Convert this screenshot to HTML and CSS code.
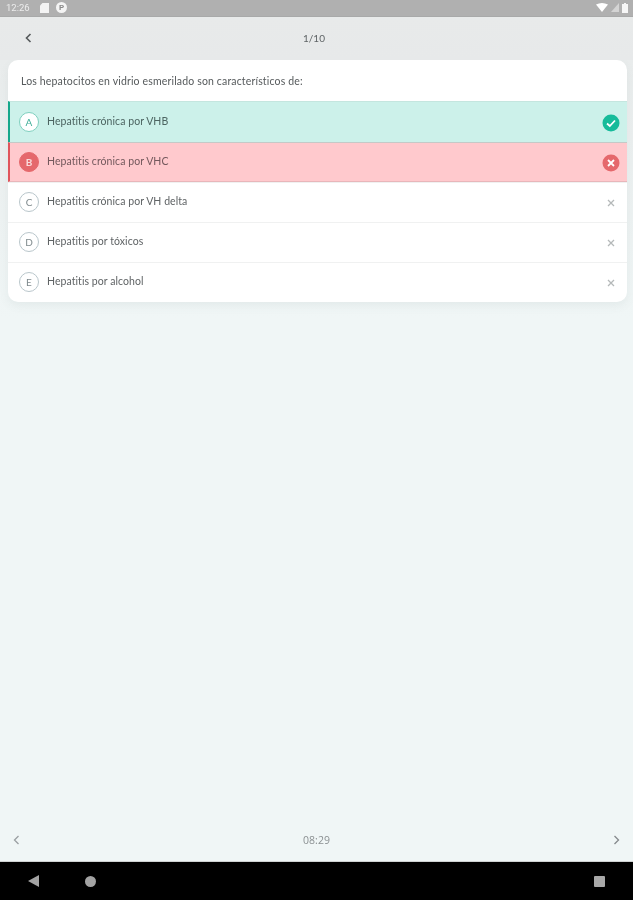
FILE: index.html
```html
<!DOCTYPE html>
<html lang="es">
<head>
<meta charset="utf-8">
<title>Pregunta 1/10</title>
<link rel="stylesheet" href="styles.css">
</head>
<body>
<div class="screen">
  <div class="statusbar">
    <div class="status-left">
      <span class="clock">12:26</span>
      <svg class="st-sd" width="9" height="10" viewBox="0 0 9 10"><path d="M2.5 0H9v10H0V2.5z" fill="#f4f4f4"/></svg>
      <span class="st-app">P</span>
    </div>
    <div class="status-right">
      <svg width="12" height="9" viewBox="0 0 12 9"><path d="M0 1.5C4-.5 8-.5 12 1.5L6 9z" fill="#fff"/></svg>
      <svg width="8" height="9" viewBox="0 0 8 9"><path d="M8 0V9H0z" fill="#d4d4d4"/></svg>
      <svg width="6" height="10" viewBox="0 0 6 10"><path d="M2 0H4V1H6V10H0V1H2z" fill="#f6f6f6"/></svg>
    </div>
  </div>

  <header class="topbar">
    <svg class="chev" width="7" height="10" viewBox="0 0 7 10"><path d="M5.5 1 1.5 5l4 4" fill="none" stroke="#55595b" stroke-width="1.6"/></svg>
    <span class="counter">1/10</span>
  </header>

  <main class="content">
    <section class="card">
      <p class="question">Los hepatocitos en vidrio esmerilado son característicos de:</p>
      <ul class="options">
        <li class="option correct">
          <span class="letter">A</span>
          <span class="label">Hepatitis crónica por VHB</span>
          <svg class="badge" width="18" height="18" viewBox="0 0 18 18"><circle cx="9" cy="9" r="8.5" fill="#16bb9a"/><path d="M5 9.5 7.8 12 13 6.5" fill="none" stroke="#fff" stroke-width="1.8"/></svg>
        </li>
        <li class="option wrong">
          <span class="letter">B</span>
          <span class="label">Hepatitis crónica por VHC</span>
          <svg class="badge" width="18" height="18" viewBox="0 0 18 18"><circle cx="9" cy="9" r="8.5" fill="#e5686c"/><path d="M6 6l6 6M12 6l-6 6" fill="none" stroke="#fff" stroke-width="1.8"/></svg>
        </li>
        <li class="option">
          <span class="letter">C</span>
          <span class="label">Hepatitis crónica por VH delta</span>
          <svg class="cross" width="18" height="18" viewBox="0 0 18 18"><path d="M6 6l6 6M12 6l-6 6" fill="none" stroke="#b4b8b9" stroke-width="1.3"/></svg>
        </li>
        <li class="option">
          <span class="letter">D</span>
          <span class="label">Hepatitis por tóxicos</span>
          <svg class="cross" width="18" height="18" viewBox="0 0 18 18"><path d="M6 6l6 6M12 6l-6 6" fill="none" stroke="#b4b8b9" stroke-width="1.3"/></svg>
        </li>
        <li class="option">
          <span class="letter">E</span>
          <span class="label">Hepatitis por alcohol</span>
          <svg class="cross" width="18" height="18" viewBox="0 0 18 18"><path d="M6 6l6 6M12 6l-6 6" fill="none" stroke="#b4b8b9" stroke-width="1.3"/></svg>
        </li>
      </ul>
    </section>
  </main>

  <footer class="bottombar">
    <svg width="7" height="10" viewBox="0 0 7 10"><path d="M5.5 1 1.5 5l4 4" fill="none" stroke="#9a9fa2" stroke-width="1.3"/></svg>
    <span class="timer">08:29</span>
    <svg width="7" height="10" viewBox="0 0 7 10"><path d="M1.5 1l4 4-4 4" fill="none" stroke="#85898c" stroke-width="1.3"/></svg>
  </footer>

  <nav class="navbar">
    <svg class="nav-back" width="11" height="12" viewBox="0 0 11 12"><path d="M11 0V12L0 6z" fill="#a3a3a3"/></svg>
    <span class="nav-home"></span>
    <span class="nav-recent"></span>
  </nav>
</div>
</body>
</html>
```
FILE: styles.css
```css
* { box-sizing: border-box; }
html, body { margin: 0; padding: 0; }
body { font-family: Lato, "Liberation Sans", sans-serif; background: #f0f6f6; }

.screen {
  width: 633px;
  height: 900px;
  display: flex;
  flex-direction: column;
  overflow: hidden;
  filter: blur(0.6px);
}

.statusbar {
  height: 17px;
  flex: none;
  background: #b0b0b0;
  border-bottom: 1px solid #a8a9a9;
  display: flex;
  align-items: center;
  justify-content: space-between;
  padding: 0 5px 1px 6px;
}
.status-left { display: flex; align-items: center; }
.clock { font: 9.5px/1 Roboto, sans-serif; color: #ececec; width: 34px; }
.st-app {
  width: 11px; height: 11px; margin-left: 7px;
  border-radius: 50%;
  background: #f4f4f4; color: #8a8a8a;
  font: 700 8px/11px Roboto, sans-serif;
  text-align: center;
}
.status-right { display: flex; align-items: center; gap: 3px; }

.topbar {
  height: 43px;
  flex: none;
  background: linear-gradient(#e8eaea, #e7e9ea);
  display: flex;
  align-items: center;
  justify-content: center;
  position: relative;
}
.chev { position: absolute; left: 25px; top: 16px; }
.counter { font-size: 10px; color: #5f6466; padding: 0 5px 2px 0; }

.content {
  flex: 1;
  min-height: 0;
  background: linear-gradient(#e9ecec, #f0f6f6 260px);
  padding: 0 6px 0 8px;
}
.card {
  background: #fff;
  border-radius: 10px;
  overflow: hidden;
  box-shadow: 0 4px 10px rgba(90, 110, 110, .08);
}
.question {
  margin: 0;
  height: 41px;
  padding: 0 13px;
  display: flex;
  align-items: center;
  font-size: 10.5px;
  color: #55595b;
  letter-spacing: .16px;
}
.options { list-style: none; margin: 0; padding: 0; }
.option {
  height: 40px;
  display: flex;
  align-items: center;
  padding: 0 7px 0 11px;
  border-top: 1px solid #f0f1f1;
}
.option:first-child { height: 41px; }
.letter {
  width: 20px; height: 20px;
  flex: none;
  border-radius: 50%;
  border: 1px solid #b9c6cb;
  background: #fff;
  color: #7f8a8d;
  font-size: 10px;
  display: flex;
  align-items: center;
  justify-content: center;
  margin-top: -1px;
}
.label { flex: 1; margin-left: 8px; font-size: 10.5px; color: #5f6365; padding-bottom: 3px; letter-spacing: .06px; }
.badge, .cross { flex: none; }
.cross { margin-top: 1px; }
.correct .badge, .wrong .badge { margin-top: 1px; }

.correct {
  background: #ccf1ea;
  border-top-color: #c4e6df;
  border-left: 2px solid #16a78b;
  padding-left: 9px;
}
.correct .letter { border-color: #7fd0bf; color: #3fae98; }
.correct .label { color: #4c6461; }
.wrong {
  background: #ffc9cd;
  border-top-color: #c5c9c7;
  border-bottom: 1px solid #e8b6ba;
  border-left: 2px solid #e0555c;
  padding-left: 9px;
}
.wrong .letter { background: #e5686c; border-color: #e5686c; color: #f9dcdc; font-weight: 700; }
.wrong .label { color: #73585c; }

.bottombar {
  height: 44px;
  flex: none;
  background: #f0f6f6;
  border-bottom: 1px solid #cfd2d2;
  display: flex;
  align-items: center;
  justify-content: space-between;
  padding: 0 13px;
}
.timer { font-family: "Open Sans", sans-serif; font-size: 10.5px; color: #8b9092; }

.navbar {
  height: 38px;
  flex: none;
  background: #000;
  display: flex;
  align-items: center;
  padding: 0 28px;
}
.nav-home { width: 11px; height: 11px; border-radius: 50%; background: #a3a3a3; margin-left: 46px; }
.nav-recent { width: 11px; height: 11px; background: #a8a8a8; border-radius: 1px; margin-left: auto; }
```
